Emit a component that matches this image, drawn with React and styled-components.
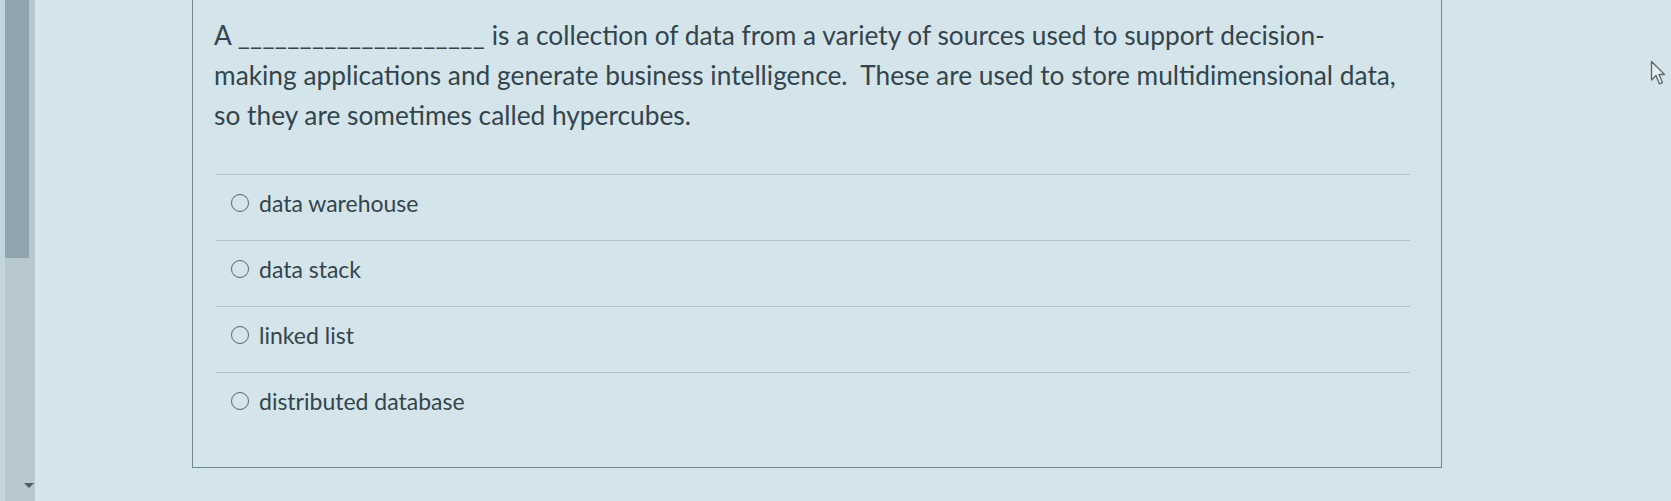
import React from 'react'
import styled, { createGlobalStyle } from 'styled-components'

const GlobalStyle = createGlobalStyle`
  html, body {
    margin: 0;
    padding: 0;
    background: #d3e4eb;
  }
  body {
    font-family: Lato, "Open Sans", "Liberation Sans", sans-serif;
    color: #34444c;
  }
`

const options = ['data warehouse', 'data stack', 'linked list', 'distributed database']

export default function App() {
  return (
    <>
      <GlobalStyle />
      <Page>
        <ScrollBar>
          <Track>
            <Thumb />
            <ArrowDown />
          </Track>
        </ScrollBar>

        <Card>
          <Question>
            A <Blank>____________________</Blank> is a collection of data from a variety of sources used to support decision-
            <br />
            making applications and generate business intelligence.&nbsp; These are used to store multidimensional data,
            <br />
            so they are sometimes called hypercubes.
          </Question>

          <OptionList>
            {options.map((label) => (
              <Option key={label}>
                <Radio />
                <OptionLabel>{label}</OptionLabel>
              </Option>
            ))}
          </OptionList>
        </Card>

        <Cursor viewBox="0 0 16 26">
          <path d="M1.5 1.5 L1.5 20 L6 15.5 L9.5 24 L12.5 22.6 L9 14.5 L14.5 14.5 Z" fill="#e8f1f5" stroke="#59666c" strokeWidth="1.3" strokeLinejoin="round" />
        </Cursor>
      </Page>
    </>
  )
}

const Page = styled.div`
  position: relative;
  display: flex;
  width: 1671px;
  height: 501px;
  overflow: hidden;
`

const ScrollBar = styled.div`
  width: 35px;
  height: 100%;
  padding-left: 5px;
  box-sizing: border-box;
  background: #c2d5dc;
`

const Track = styled.div`
  display: flex;
  flex-direction: column;
  align-items: flex-end;
  height: 100%;
  background: #b7c9cf;
`

const Thumb = styled.div`
  align-self: stretch;
  margin-right: 6px;
  height: 258px;
  background: #8fa4ac;
`

const ArrowDown = styled.div`
  margin-top: auto;
  margin-bottom: 13px;
  margin-right: 1px;
  width: 0;
  height: 0;
  border-left: 5px solid transparent;
  border-right: 5px solid transparent;
  border-top: 5px solid #4d5c63;
`

const Card = styled.div`
  margin-left: 157px;
  width: 1250px;
  height: 468px;
  box-sizing: border-box;
  border: 1.5px solid #6f8891;
  border-top: none;
  padding: 15px 10px 0 21px;
`

const Question = styled.p`
  margin: 0;
  width: 1215px;
  font-size: 26.3px;
  line-height: 40px;
  color: #34444c;
  white-space: nowrap;
`

const Blank = styled.span`
  letter-spacing: 0.3px;
`

const OptionList = styled.ul`
  list-style: none;
  margin: 39px 21px 0 2px;
  padding: 0;
`

const Option = styled.li`
  display: flex;
  align-items: center;
  gap: 10px;
  height: 66px;
  padding: 0 0 10px 15px;
  box-sizing: border-box;
  border-top: 1.5px solid #b0c2c9;
`

const Radio = styled.span`
  width: 16px;
  height: 16px;
  border-radius: 50%;
  border: 1.8px solid #56656c;
  flex-shrink: 0;
`

const OptionLabel = styled.span`
  font-size: 23px;
  color: #34444c;
`

const Cursor = styled.svg`
  position: absolute;
  left: 1650px;
  top: 60px;
  width: 16px;
  height: 26px;
`
